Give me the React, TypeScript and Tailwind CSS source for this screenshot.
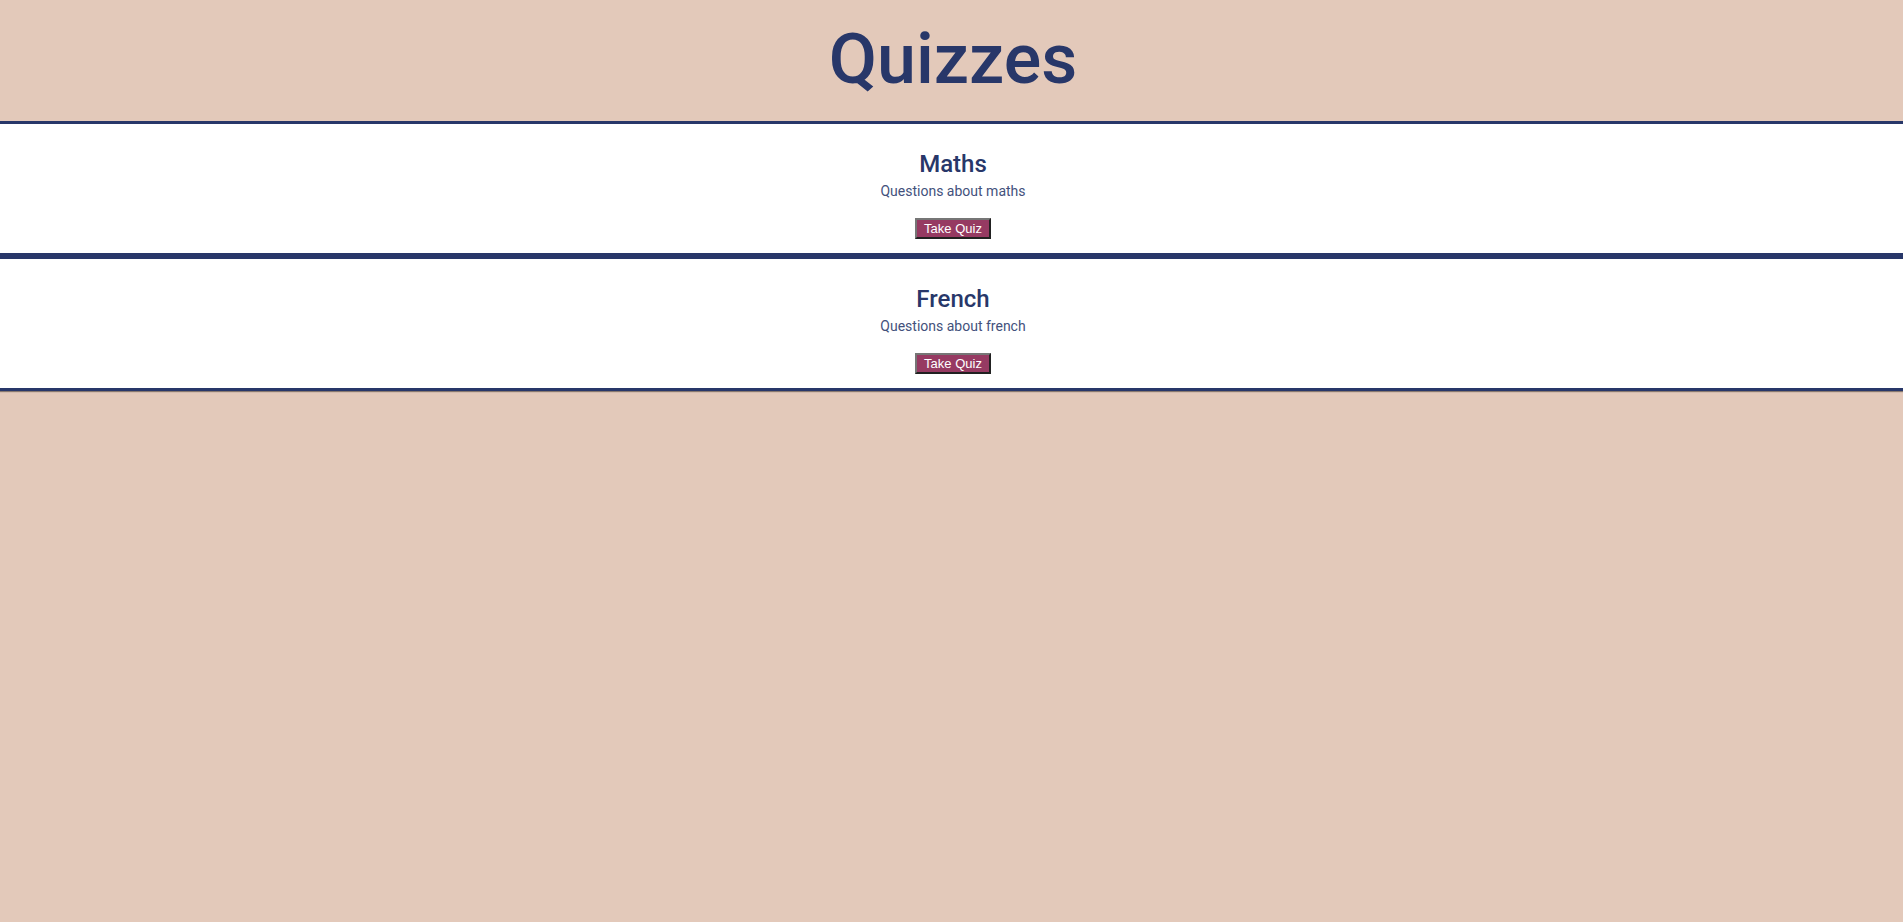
const quizzes = [
  { name: "Maths", description: "Questions about maths" },
  { name: "French", description: "Questions about french" },
];

export default function App() {
  return (
    <main className="min-h-screen bg-[#e3c9ba] text-center font-['Roboto',sans-serif] text-[#283769]">
      <h1 className="pl-[3px] pt-[15px] pb-[17px] text-[70px] leading-[89px] font-medium">Quizzes</h1>
      <ul className="shadow-[0_1px_1px_rgba(0,0,0,0.4)]">
        {quizzes.map((quiz) => (
          <li key={quiz.name} className="border-y-3 border-[#283769] bg-white pl-[3px] pt-6 pb-[14px]">
            <h2 className="text-2xl font-medium">{quiz.name}</h2>
            <p className="mb-4 text-sm leading-[22px] text-[#43517c]">{quiz.description}</p>
            <button
              type="button"
              className="mx-auto block border-2 border-t-[#767676] border-r-[#212121] border-b-[#212121] border-l-[#767676] bg-[#963a62] px-[7px] font-['Liberation_Sans',sans-serif] text-[13px] leading-[17px] text-white"
            >
              Take Quiz
            </button>
          </li>
        ))}
      </ul>
    </main>
  );
}
